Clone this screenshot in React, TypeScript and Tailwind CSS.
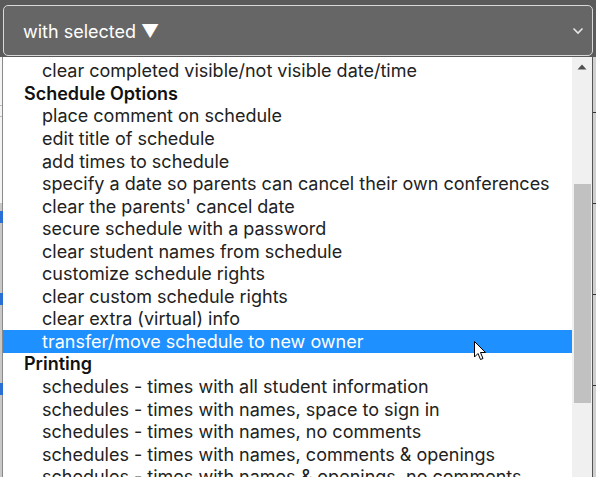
import React from "react";

type Row = { text: string; group?: boolean; selected?: boolean };

const rows: Row[] = [
  { text: "clear completed visible/not visible date/time" },
  { text: "Schedule Options", group: true },
  { text: "place comment on schedule" },
  { text: "edit title of schedule" },
  { text: "add times to schedule" },
  { text: "specify a date so parents can cancel their own conferences" },
  { text: "clear the parents' cancel date" },
  { text: "secure schedule with a password" },
  { text: "clear student names from schedule" },
  { text: "customize schedule rights" },
  { text: "clear custom schedule rights" },
  { text: "clear extra (virtual) info" },
  { text: "transfer/move schedule to new owner", selected: true },
  { text: "Printing", group: true },
  { text: "schedules - times with all student information" },
  { text: "schedules - times with names, space to sign in" },
  { text: "schedules - times with names, no comments" },
  { text: "schedules - times with names, comments & openings" },
  { text: "schedules - times with names & openings, no comments" },
];

function Check() {
  return <div className="w-[3px] h-[12px] bg-[#2a6fd6]" />;
}

export default function App() {
  return (
    <div
      className="relative w-[596px] h-[477px] overflow-hidden bg-white"
      style={{ fontFamily: "Inter, 'Noto Sans', sans-serif" }}
    >
      {/* top select */}
      <div className="h-[57px] bg-[#5a5a5a] pt-[5px] pl-[3px] pr-[3px] pb-[1px]">
        <div className="h-[51px] rounded-[5px] border border-[#d8d8d8] bg-[#666666] flex items-center pl-[19px] pr-[8px]">
          <span className="text-white text-[18px] flex-1 pt-[1px]">with selected ▼</span>
          <svg width="12" height="8" viewBox="0 0 12 8">
            <path d="M1.5 1.5 L6 6 L10.5 1.5" stroke="#e6e6e6" strokeWidth="1.6" fill="none" />
          </svg>
        </div>
      </div>
      {/* body */}
      <div className="flex h-[420px]">
        {/* left page strip */}
        <div className="w-[3px] bg-[#f4f4f4] border-r border-[#8a8a8a] flex flex-col">
          <div className="h-[48px]" />
          <div className="h-[1px] bg-[#bbb]" />
          <div className="h-[10px]" />
          <div className="h-[1px] bg-[#bbb]" />
          <div className="h-[86px]" />
          <div className="h-[8px] bg-[#c8c8c8]" />
          <Check />
          <div className="h-[70px] bg-[#c8c8c8]" />
          <Check />
          <div className="h-[78px] bg-[#c8c8c8]" />
          <Check />
          <div className="flex-1 bg-[#c8c8c8]" />
        </div>
        {/* list */}
        <div className="w-[569px] bg-white pt-[2.6px]">
          {rows.map((r, i) => (
            <div
              key={i}
              className={
                "h-[22.55px] flex items-center whitespace-nowrap text-[18px] leading-[22px] " +
                (r.group
                  ? "pl-[21px] font-semibold text-[#111]"
                  : r.selected
                  ? "pl-[39px] bg-[#1e90ff] text-white"
                  : "pl-[39px] text-[#222]")
              }
            >
              <span className="pt-[1px]">{r.text}</span>
            </div>
          ))}
        </div>
        {/* scrollbar */}
        <div className="w-[20px] bg-[#f0f0f0] flex flex-col items-center">
          <div className="h-[7px]" />
          <svg width="10" height="6" viewBox="0 0 10 6">
            <path d="M0.5 5.5 L5 0.5 L9.5 5.5 Z" fill="#505050" />
          </svg>
          <div className="h-[114px]" />
          <div className="w-[17px] h-[219px] bg-[#c1c1c1]" />
        </div>
        {/* right border + page strip */}
        <div className="w-[1px] bg-[#555]" />
        <div className="flex-1 bg-[#d0d0d0] flex flex-col">
          <div className="h-[55px]" />
          <div className="h-[1px] bg-[#333]" />
          <div className="h-[90px]" />
          <div className="h-[1px] bg-[#333]" />
          <div className="h-[90px]" />
          <div className="h-[1px] bg-[#333]" />
          <div className="h-[90px]" />
          <div className="h-[1px] bg-[#333]" />
        </div>
      </div>
      {/* cursor */}
      <svg
        className="absolute left-[474px] top-[341px]"
        width="13"
        height="20"
        viewBox="0 0 13 20"
      >
        <path
          d="M0.5 0.5 L0.5 16 L4 12.5 L6.5 18.5 L9 17.5 L6.5 11.5 L11.5 11.5 Z"
          fill="white"
          stroke="black"
          strokeWidth="1"
          strokeLinejoin="round"
        />
      </svg>
    </div>
  );
}
